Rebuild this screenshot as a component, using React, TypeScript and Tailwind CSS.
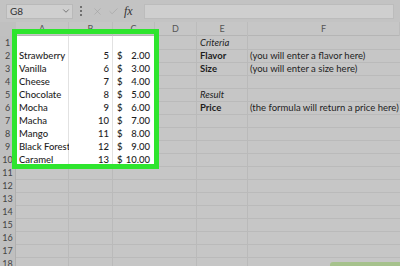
import React from "react";
import { ChevronDown, X, Check } from "lucide-react";

type Row = {
  a?: string;
  b?: string;
  c?: string;
  e?: string;
  eStyle?: "bold" | "italic";
  f?: string;
};

const rows: Row[] = [
  { e: "Criteria", eStyle: "italic" },
  { a: "Strawberry", b: "5", c: "2.00", e: "Flavor", eStyle: "bold", f: "(you will enter a flavor here)" },
  { a: "Vanilla", b: "6", c: "3.00", e: "Size", eStyle: "bold", f: "(you will enter a size here)" },
  { a: "Cheese", b: "7", c: "4.00" },
  { a: "Chocolate", b: "8", c: "5.00", e: "Result", eStyle: "italic" },
  { a: "Mocha", b: "9", c: "6.00", e: "Price", eStyle: "bold", f: "(the formula will return a price here)" },
  { a: "Macha", b: "10", c: "7.00" },
  { a: "Mango", b: "11", c: "8.00" },
  { a: "Black Forest", b: "12", c: "9.00" },
  { a: "Caramel", b: "13", c: "10.00" },
  {}, {}, {}, {}, {}, {}, {}, {},
];

const cols = "grid grid-cols-[16px_53px_44px_42px_42px_51px_1fr]";

export default function App() {
  return (
    <div
      className="relative w-[400px] h-[266px] overflow-hidden bg-[#c6c6c6] text-[#1e1e1e]"
      style={{ fontFamily: "Lato, 'Liberation Sans', sans-serif" }}
    >
      {/* formula bar */}
      <div className="flex items-center h-[22px] px-[6px] gap-[6px] bg-[#c3c3c3]">
        <div className="flex items-center justify-between w-[67px] h-[15px] pl-[3px] pr-[1px] bg-[#cfcfcf] border border-[#b9b9b9] text-[10px] text-[#333]">
          <span>G8</span>
          <ChevronDown size={10} strokeWidth={1.5} className="text-[#444]" />
        </div>
        <div className="flex flex-col gap-[2px] items-center w-[3px]">
          <span className="w-[2px] h-[2px] bg-[#555] rounded-full" />
          <span className="w-[2px] h-[2px] bg-[#555] rounded-full" />
          <span className="w-[2px] h-[2px] bg-[#555] rounded-full" />
        </div>
        <div className="flex items-center gap-[5px] pl-[4px] text-[#9e9e9e]">
          <X size={11} strokeWidth={1.2} />
          <Check size={11} strokeWidth={1.2} />
          <span
            className="text-[12px] italic text-[#333] w-[14px]"
            style={{ fontFamily: "'Liberation Serif', serif" }}
          >
            fx
          </span>
        </div>
        <div className="flex-1 h-[15px] bg-[#cfcfcf] border border-[#bcbcbc]" />
      </div>

      {/* column headers */}
      <div className={`${cols} h-[14px] text-[9px] text-[#555] border-b border-[#b5b5b5]`}>
        <div className="bg-[#c0c0c0]" />
        {["A", "B", "C", "D", "E", "F"].map((l) => (
          <div key={l} className="flex items-center justify-center border-r border-[#bcbcbc]">
            {l}
          </div>
        ))}
      </div>

      {/* rows */}
      {rows.map((r, i) => {
        const sel = i < 10;
        const cell = sel ? "bg-white border-[#e2e2e2]" : "border-[#bababa]";
        return (
          <div key={i} className={`${cols} h-[13px] text-[9.5px] leading-[13px]`}>
            <div className="relative flex items-center justify-center bg-[#bfbfbf] border-r border-b border-[#b0b0b0] text-[9px] text-[#444]">
              {i + 1}
              {i === 7 && <span className="absolute right-0 top-0 w-[1px] h-[12px] bg-[#333]" />}
            </div>
            <div className={`pl-[3px] font-medium border-r border-b whitespace-nowrap ${cell}`}>{r.a}</div>
            <div className={`pr-[3px] text-right font-medium border-r border-b ${cell}`}>{r.b}</div>
            <div className={`flex justify-between pl-[4px] pr-[5px] font-medium border-b ${cell}`}>
              {r.c && (
                <>
                  <span>$</span>
                  <span>{r.c}</span>
                </>
              )}
            </div>
            <div className="border-r border-b border-[#bababa]" />
            <div
              className={`pl-[3px] border-r border-b border-[#bababa] whitespace-nowrap ${
                r.eStyle === "bold" ? "font-bold" : r.eStyle === "italic" ? "italic" : ""
              }`}
            >
              {r.e}
            </div>
            <div className="pl-[2px] border-b border-[#bababa] whitespace-nowrap">{r.f}</div>
          </div>
        );
      })}

      {/* selection outline */}
      <div className="absolute left-[12px] top-[29px] w-[147px] h-[140px] border-[5px] border-[#2ee52e] pointer-events-none" />

      {/* corner badge */}
      <div className="absolute left-[330px] top-[262px] w-[80px] h-[10px] rounded-tl-[3px] bg-[#a6c28c]" />
    </div>
  );
}
